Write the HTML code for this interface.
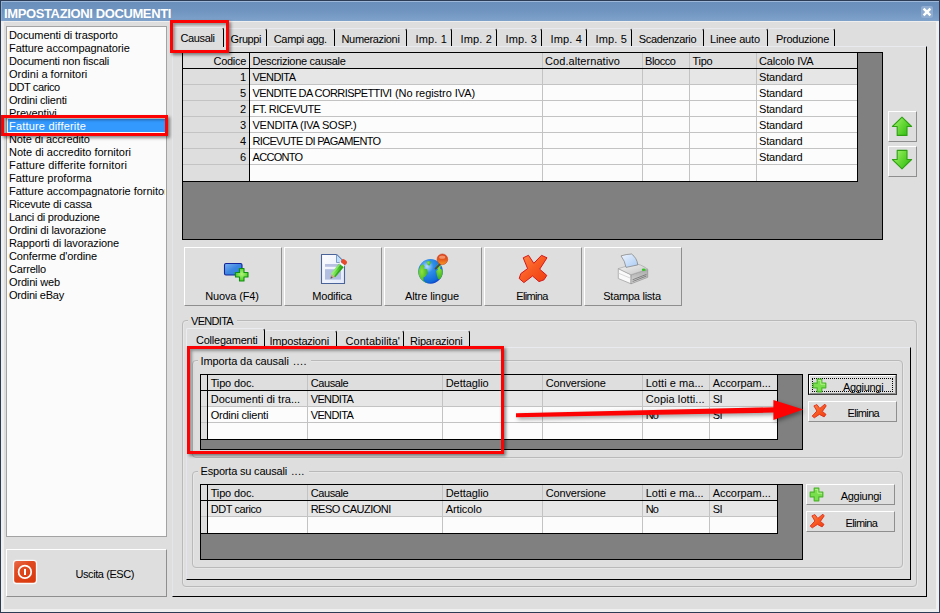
<!DOCTYPE html>
<html><head><meta charset="utf-8"><title>IMPOSTAZIONI DOCUMENTI</title><style>html,body{margin:0;padding:0}body{width:940px;height:613px;position:relative;overflow:hidden;background:#dedede;font-family:"Liberation Sans", sans-serif;font-size:11px}
body>div,body>svg,body>span{position:absolute;box-sizing:content-box}
.t{white-space:nowrap;line-height:13px;height:13px}</style></head><body>
<div style="left:0;top:0;width:938px;height:611px;border:1px solid #2b3c54;background:#dedede"></div>
<div style="left:1px;top:21px;width:932px;height:587px;border:3px solid #efefef;border-top-width:1px"></div>
<div style="left:1px;top:1px;width:938px;height:20px;background:linear-gradient(#6b8fbb,#6e93be 40%,#7ea2ca);border-top:1px solid #9db8d8;border-left:1px solid #8eaed3;box-sizing:border-box"></div>
<span class="t" id="t0" style="font-size:13px;color:#fff;font-weight:bold;letter-spacing:-0.376px;left:4px;top:7px;">IMPOSTAZIONI DOCUMENTI</span>
<div style="left:921px;top:6px;width:12px;height:12px;background:#8facd0;border-radius:2px"></div>
<svg style="left:921px;top:6px" width="12" height="12" viewBox="0 0 12 12"><path d="M2.6 2.6 L9.4 9.4 M9.4 2.6 L2.6 9.4" stroke="#fff" stroke-width="2.4" stroke-linecap="butt"/></svg>
<div style="left:6px;top:26px;width:159px;height:509px;border:1px solid #a3a3a3;background:#fbfbfb"></div>
<div style="left:8px;top:119px;width:158px;height:13px;background:#3399ff"></div>
<span class="t" id="t1" style="font-size:11px;color:#000;letter-spacing:-0.087px;left:9px;top:29px;">Documenti di trasporto</span>
<span class="t" id="t2" style="font-size:11px;color:#000;letter-spacing:-0.067px;left:9px;top:42px;">Fatture accompagnatorie</span>
<span class="t" id="t3" style="font-size:11px;color:#000;letter-spacing:-0.217px;left:9px;top:55px;">Documenti non fiscali</span>
<span class="t" id="t4" style="font-size:11px;color:#000;left:9px;top:68px;">Ordini a fornitori</span>
<span class="t" id="t5" style="font-size:11px;color:#000;letter-spacing:-0.406px;left:9px;top:81px;">DDT carico</span>
<span class="t" id="t6" style="font-size:11px;color:#000;letter-spacing:-0.199px;left:9px;top:94px;">Ordini clienti</span>
<span class="t" id="t7" style="font-size:11px;color:#000;letter-spacing:-0.055px;left:9px;top:107px;">Preventivi</span>
<span class="t" id="t8" style="font-size:11px;color:#fff;letter-spacing:0.189px;left:9px;top:120px;">Fatture differite</span>
<span class="t" id="t9" style="font-size:11px;color:#000;letter-spacing:-0.106px;left:9px;top:133px;">Note di accredito</span>
<span class="t" id="t10" style="font-size:11px;color:#000;letter-spacing:-0.010px;left:9px;top:146px;">Note di accredito fornitori</span>
<span class="t" id="t11" style="font-size:11px;color:#000;letter-spacing:0.175px;left:9px;top:159px;">Fatture differite fornitori</span>
<span class="t" id="t12" style="font-size:11px;color:#000;letter-spacing:0.052px;left:9px;top:172px;">Fatture proforma</span>
<span class="t" id="t13" style="font-size:11px;color:#000;letter-spacing:-0.025px;left:9px;top:185px;width:155.6px;overflow:hidden;">Fatture accompagnatorie fornitori</span>
<span class="t" id="t14" style="font-size:11px;color:#000;letter-spacing:-0.204px;left:9px;top:198px;">Ricevute di cassa</span>
<span class="t" id="t15" style="font-size:11px;color:#000;letter-spacing:-0.245px;left:9px;top:211px;">Lanci di produzione</span>
<span class="t" id="t16" style="font-size:11px;color:#000;letter-spacing:-0.156px;left:9px;top:224px;">Ordini di lavorazione</span>
<span class="t" id="t17" style="font-size:11px;color:#000;letter-spacing:-0.109px;left:9px;top:237px;">Rapporti di lavorazione</span>
<span class="t" id="t18" style="font-size:11px;color:#000;letter-spacing:-0.127px;left:9px;top:250px;">Conferme d'ordine</span>
<span class="t" id="t19" style="font-size:11px;color:#000;letter-spacing:-0.189px;left:9px;top:263px;">Carrello</span>
<span class="t" id="t20" style="font-size:11px;color:#000;letter-spacing:-0.158px;left:9px;top:276px;">Ordini web</span>
<span class="t" id="t21" style="font-size:11px;color:#000;letter-spacing:-0.226px;left:9px;top:289px;">Ordini eBay</span>
<div style="left:6px;top:549px;width:159px;height:46px;border:1px solid;border-color:#fff #8e8e8e #8e8e8e #fff;background:#dedede;"></div>
<svg style="left:12px;top:559px" width="26" height="26" viewBox="12 559 26 26">
<defs><linearGradient id="gq" x1="0" y1="0" x2=".6" y2="1"><stop offset="0" stop-color="#ea7150"/><stop offset=".4" stop-color="#e04a20"/><stop offset="1" stop-color="#da3a0e"/></linearGradient></defs>
<rect x="13.5" y="560.3" width="23" height="23.2" rx="3" fill="url(#gq)" stroke="#fbfbfb" stroke-width="1.3"/>
<circle cx="24.9" cy="571.9" r="6.3" fill="none" stroke="#fff" stroke-width="1.7"/>
<rect x="24" y="568.9" width="2" height="6.1" fill="#fff"/></svg>
<span class="t" id="t22" style="font-size:11px;color:#000;letter-spacing:-0.422px;left:75.5px;top:568px;">Uscita (ESC)</span>
<div style="left:172px;top:46px;width:753px;height:549px;border:1px solid;border-color:#e8eaf0 #000 #000 #e4e6ec"></div>
<div style="left:172px;top:27px;width:50px;height:19px;border-top:1px solid #eaecf0;border-left:1px solid #eaecf0;border-right:1px solid #000;border-radius:2px 3px 0 0;background:#dedede"></div>
<span class="t" id="t23" style="font-size:11px;color:#000;letter-spacing:-0.384px;left:180.5px;top:32px;">Causali</span>
<div style="left:225px;top:28px;width:41px;height:17px;border-top:1px solid #e8eaf0;border-right:1px solid #000;border-radius:2px 3px 0 0"></div>
<span class="t" id="t24" style="font-size:11px;color:#000;letter-spacing:-0.422px;left:230.5px;top:33px;">Gruppi</span>
<div style="left:267px;top:28px;width:67px;height:17px;border-top:1px solid #e8eaf0;border-right:1px solid #000;border-radius:2px 3px 0 0"></div>
<span class="t" id="t25" style="font-size:11px;color:#000;letter-spacing:-0.327px;left:273.75px;top:33px;">Campi agg.</span>
<div style="left:335px;top:28px;width:71px;height:17px;border-top:1px solid #e8eaf0;border-right:1px solid #000;border-radius:2px 3px 0 0"></div>
<span class="t" id="t26" style="font-size:11px;color:#000;letter-spacing:-0.341px;left:341.5px;top:33px;">Numerazioni</span>
<div style="left:407px;top:28px;width:44px;height:17px;border-top:1px solid #e8eaf0;border-right:1px solid #000;border-radius:2px 3px 0 0"></div>
<span class="t" id="t27" style="font-size:11px;color:#000;letter-spacing:0.154px;left:415.5px;top:33px;">Imp. 1</span>
<div style="left:452px;top:28px;width:44px;height:17px;border-top:1px solid #e8eaf0;border-right:1px solid #000;border-radius:2px 3px 0 0"></div>
<span class="t" id="t28" style="font-size:11px;color:#000;letter-spacing:0.154px;left:460.5px;top:33px;">Imp. 2</span>
<div style="left:497px;top:28px;width:44px;height:17px;border-top:1px solid #e8eaf0;border-right:1px solid #000;border-radius:2px 3px 0 0"></div>
<span class="t" id="t29" style="font-size:11px;color:#000;letter-spacing:0.154px;left:505.5px;top:33px;">Imp. 3</span>
<div style="left:542px;top:28px;width:44px;height:17px;border-top:1px solid #e8eaf0;border-right:1px solid #000;border-radius:2px 3px 0 0"></div>
<span class="t" id="t30" style="font-size:11px;color:#000;letter-spacing:0.154px;left:550.5px;top:33px;">Imp. 4</span>
<div style="left:587px;top:28px;width:44px;height:17px;border-top:1px solid #e8eaf0;border-right:1px solid #000;border-radius:2px 3px 0 0"></div>
<span class="t" id="t31" style="font-size:11px;color:#000;letter-spacing:0.154px;left:595.5px;top:33px;">Imp. 5</span>
<div style="left:632px;top:28px;width:71px;height:17px;border-top:1px solid #e8eaf0;border-right:1px solid #000;border-radius:2px 3px 0 0"></div>
<span class="t" id="t32" style="font-size:11px;color:#000;letter-spacing:-0.332px;left:638.75px;top:33px;">Scadenzario</span>
<div style="left:704px;top:28px;width:63px;height:17px;border-top:1px solid #e8eaf0;border-right:1px solid #000;border-radius:2px 3px 0 0"></div>
<span class="t" id="t33" style="font-size:11px;color:#000;letter-spacing:-0.139px;left:710px;top:33px;">Linee auto</span>
<div style="left:768px;top:28px;width:66px;height:17px;border-top:1px solid #e8eaf0;border-right:1px solid #000;border-radius:2px 3px 0 0"></div>
<span class="t" id="t34" style="font-size:11px;color:#000;letter-spacing:-0.266px;left:776px;top:33px;">Produzione</span>
<div style="left:182px;top:52px;width:699px;height:186px;border:1px solid #000;background:#808080"></div>
<div style="left:183px;top:53px;width:674px;height:128px;background:#fcfcfc;border-right:1px solid #000;border-bottom:1px solid #000"></div>
<div style="left:183px;top:53px;width:674px;height:15px;background:#dedede;border-bottom:1px solid #000"></div>
<div style="left:183px;top:69px;width:66px;height:112px;background:#dedede;border-right:1px solid #000"></div>
<div style="left:249px;top:53px;width:1px;height:15px;background:#000"></div>
<div style="left:250px;top:69px;width:607px;height:16px;background:#e6e6e6"></div>
<div style="left:183px;top:84px;width:674px;height:1px;background:#c3c3c3"></div>
<div style="left:183px;top:100px;width:674px;height:1px;background:#c3c3c3"></div>
<div style="left:183px;top:116px;width:674px;height:1px;background:#c3c3c3"></div>
<div style="left:183px;top:132px;width:674px;height:1px;background:#c3c3c3"></div>
<div style="left:183px;top:148px;width:674px;height:1px;background:#c3c3c3"></div>
<div style="left:183px;top:164px;width:674px;height:1px;background:#c3c3c3"></div>
<div style="left:542px;top:53px;width:1px;height:128px;background:#c3c3c3"></div>
<div style="left:642px;top:53px;width:1px;height:128px;background:#c3c3c3"></div>
<div style="left:689px;top:53px;width:1px;height:128px;background:#c3c3c3"></div>
<div style="left:756px;top:53px;width:1px;height:128px;background:#c3c3c3"></div>
<div style="left:249px;top:69px;width:1px;height:112px;background:#000"></div>
<div style="left:183px;top:68px;width:674px;height:1px;background:#000"></div>
<span class="t" id="t35" style="font-size:11px;color:#000;letter-spacing:-0.292px;right:694px;top:55px;">Codice</span>
<span class="t" id="t36" style="font-size:11px;color:#000;letter-spacing:-0.286px;left:252.5px;top:55px;">Descrizione causale</span>
<span class="t" id="t37" style="font-size:11px;color:#000;letter-spacing:0.067px;left:545px;top:55px;">Cod.alternativo</span>
<span class="t" id="t38" style="font-size:11px;color:#000;letter-spacing:-0.422px;left:645px;top:55px;">Blocco</span>
<span class="t" id="t39" style="font-size:11px;color:#000;letter-spacing:-0.250px;left:692.5px;top:55px;">Tipo</span>
<span class="t" id="t40" style="font-size:11px;color:#000;letter-spacing:-0.196px;left:759px;top:55px;">Calcolo IVA</span>
<span class="t" id="t41" style="font-size:11px;color:#000;right:694px;top:71px;">1</span>
<span class="t" id="t42" style="font-size:11px;color:#000;letter-spacing:-0.551px;left:252.5px;top:71px;">VENDITA</span>
<span class="t" id="t43" style="font-size:11px;color:#000;letter-spacing:-0.145px;left:759px;top:71px;">Standard</span>
<span class="t" id="t44" style="font-size:11px;color:#000;right:694px;top:87px;">5</span>
<span class="t" id="t45" style="font-size:11px;color:#000;letter-spacing:-0.576px;left:252.5px;top:87px;">VENDITE DA CORRISPETTIVI</span>
<span class="t" id="t46" style="font-size:11px;color:#000;letter-spacing:-0.064px;left:395px;top:87px;">(No registro IVA)</span>
<span class="t" id="t47" style="font-size:11px;color:#000;letter-spacing:-0.145px;left:759px;top:87px;">Standard</span>
<span class="t" id="t48" style="font-size:11px;color:#000;right:694px;top:103px;">2</span>
<span class="t" id="t49" style="font-size:11px;color:#000;letter-spacing:-0.496px;left:252.5px;top:103px;">FT. RICEVUTE</span>
<span class="t" id="t50" style="font-size:11px;color:#000;letter-spacing:-0.145px;left:759px;top:103px;">Standard</span>
<span class="t" id="t51" style="font-size:11px;color:#000;right:694px;top:119px;">3</span>
<span class="t" id="t52" style="font-size:11px;color:#000;letter-spacing:-0.221px;left:252.5px;top:119px;">VENDITA (IVA SOSP.)</span>
<span class="t" id="t53" style="font-size:11px;color:#000;letter-spacing:-0.145px;left:759px;top:119px;">Standard</span>
<span class="t" id="t54" style="font-size:11px;color:#000;right:694px;top:135px;">4</span>
<span class="t" id="t55" style="font-size:11px;color:#000;letter-spacing:-0.667px;left:252.5px;top:135px;">RICEVUTE DI PAGAMENTO</span>
<span class="t" id="t56" style="font-size:11px;color:#000;letter-spacing:-0.145px;left:759px;top:135px;">Standard</span>
<span class="t" id="t57" style="font-size:11px;color:#000;right:694px;top:151px;">6</span>
<span class="t" id="t58" style="font-size:11px;color:#000;letter-spacing:-0.688px;left:252.5px;top:151px;">ACCONTO</span>
<span class="t" id="t59" style="font-size:11px;color:#000;letter-spacing:-0.145px;left:759px;top:151px;">Standard</span>
<div style="left:888px;top:111px;width:27px;height:29px;border:1px solid;border-color:#fff #8e8e8e #8e8e8e #fff;background:#dedede;"></div>
<div style="left:888px;top:146px;width:27px;height:29px;border:1px solid;border-color:#fff #8e8e8e #8e8e8e #fff;background:#dedede;"></div>
<svg style="left:888px;top:111px" width="29" height="66" viewBox="888 111 29 66"><defs><linearGradient id="ga" x1="0" y1="0" x2="1" y2=".6"><stop offset="0" stop-color="#b4f684"/><stop offset=".5" stop-color="#6edc3c"/><stop offset="1" stop-color="#36c014"/></linearGradient></defs><path d="M902 117.2 L911.6 126.5 L907 126.5 L907 135.4 L897.2 135.4 L897.2 126.5 L892.4 126.5 Z" fill="url(#ga)" stroke="#2ea012" stroke-width="1.1" stroke-linejoin="round"/><path d="M902 168.8 L911.6 159.5 L907 159.5 L907 150.4 L897.2 150.4 L897.2 159.5 L892.4 159.5 Z" fill="url(#ga)" stroke="#2ea012" stroke-width="1.1" stroke-linejoin="round"/></svg>
<div style="left:184px;top:247px;width:96px;height:57px;border:1px solid;border-color:#fff #8e8e8e #8e8e8e #fff;background:#dedede;"></div>
<span class="t" id="t60" style="font-size:11px;color:#000;letter-spacing:-0.133px;left:205.15px;top:290px;">Nuova (F4)</span>
<div style="left:284px;top:247px;width:96px;height:57px;border:1px solid;border-color:#fff #8e8e8e #8e8e8e #fff;background:#dedede;"></div>
<span class="t" id="t61" style="font-size:11px;color:#000;letter-spacing:-0.209px;left:312.35px;top:290px;">Modifica</span>
<div style="left:384px;top:247px;width:96px;height:57px;border:1px solid;border-color:#fff #8e8e8e #8e8e8e #fff;background:#dedede;"></div>
<span class="t" id="t62" style="font-size:11px;color:#000;letter-spacing:-0.087px;left:405px;top:290px;">Altre lingue</span>
<div style="left:484px;top:247px;width:96px;height:57px;border:1px solid;border-color:#fff #8e8e8e #8e8e8e #fff;background:#dedede;"></div>
<span class="t" id="t63" style="font-size:11px;color:#000;letter-spacing:-0.654px;left:516.25px;top:290px;">Elimina</span>
<div style="left:584px;top:247px;width:96px;height:57px;border:1px solid;border-color:#fff #8e8e8e #8e8e8e #fff;background:#dedede;"></div>
<span class="t" id="t64" style="font-size:11px;color:#000;letter-spacing:-0.253px;left:603.25px;top:290px;">Stampa lista</span>
<svg style="left:215px;top:252px" width="40" height="36" viewBox="215 252 40 36">
<defs><linearGradient id="gb" x1="0" y1="0" x2="1" y2="1"><stop offset="0" stop-color="#7db4f2"/><stop offset=".5" stop-color="#3b86e0"/><stop offset="1" stop-color="#2f7ddd"/></linearGradient>
<radialGradient id="gp" cx=".5" cy=".45" r=".6"><stop offset="0" stop-color="#b4f47c"/><stop offset="1" stop-color="#3cc818"/></radialGradient></defs>
<rect x="224.5" y="263.5" width="17.5" height="11.5" rx="1.5" fill="url(#gb)" stroke="#14249a" stroke-width="1.1"/>
<path d="M239.5 268.5h4.5v4h4v4.5h-4v4h-4.5v-4h-4v-4.5h4z" fill="url(#gp)" stroke="#109010" stroke-width="1.1" stroke-linejoin="round"/>
</svg>
<svg style="left:313px;top:250px" width="40" height="38" viewBox="313 250 40 38">
<defs><linearGradient id="gpg" x1="0" y1="0" x2="1" y2="1"><stop offset="0" stop-color="#fbfcff"/><stop offset="1" stop-color="#e3e9fa"/></linearGradient>
<linearGradient id="gpc" x1="0" y1="0" x2="1" y2="0"><stop offset="0" stop-color="#8be866"/><stop offset=".45" stop-color="#5ed83a"/><stop offset="1" stop-color="#2ea418"/></linearGradient></defs>
<path d="M321.5 254.5H336.5L344.5 262.5V283.5H321.5Z" fill="url(#gpg)" stroke="#4a6398" stroke-width="1.1" stroke-linejoin="round"/>
<path d="M336.5 254.5V262.5H344.5Z" fill="#bfe0f8" stroke="#6a86b8" stroke-width=".8" stroke-linejoin="round"/>
<rect x="325" y="264" width="16" height="2.8" fill="#b9c1e2"/>
<rect x="325" y="269.2" width="16" height="10.4" fill="#b2bde2"/>
<g transform="translate(330.7 278.6) rotate(-51.5)">
<path d="M0 0 L3.9 -2.3 L3.9 2.3 Z" fill="#cfa982"/>
<path d="M-0.3 0 L1.9 -1.2 L1.9 1.2 Z" fill="#555"/>
<rect x="3.9" y="-2.8" width="13.3" height="5.6" fill="url(#gpc)"/>
<rect x="3.9" y="-2.8" width="13.3" height="1.8" fill="#a4f284" opacity=".7"/>
<rect x="3.9" y="1.2" width="13.3" height="1.6" fill="#2a9a16" opacity=".8"/>
<rect x="17.2" y="-2.9" width="2" height="5.8" fill="#f6f6f6"/>
<rect x="19.2" y="-3.1" width="4.4" height="6.2" rx="2" fill="#e64a2a"/>
</g>
</svg>
<svg style="left:412px;top:250px" width="42" height="38" viewBox="412 250 42 38">
<defs><radialGradient id="gg" cx=".36" cy=".3" r=".75"><stop offset="0" stop-color="#b6dcff"/><stop offset=".35" stop-color="#2f8ee8"/><stop offset=".85" stop-color="#116ad8"/><stop offset="1" stop-color="#1038c8"/></radialGradient>
<radialGradient id="gl" cx=".4" cy=".35" r=".8"><stop offset="0" stop-color="#8ee43c"/><stop offset="1" stop-color="#1f9e1c"/></radialGradient>
<linearGradient id="go" x1="0" y1="0" x2="0" y2="1"><stop offset="0" stop-color="#d8401c"/><stop offset=".5" stop-color="#e4561c"/><stop offset="1" stop-color="#f59a22"/></linearGradient>
<clipPath id="cg"><circle cx="430.5" cy="271.4" r="12.2"/></clipPath></defs>
<circle cx="430.5" cy="271.4" r="12.3" fill="url(#gg)"/>
<g clip-path="url(#cg)" fill="url(#gl)">
<path d="M420.6 265.5 L423.2 264.2 L424.8 267 L423.6 268.6 L427.2 269.2 L427.6 273.2 L425.6 276.2 L423.4 277.4 L423.6 281 L427 283 L425 285 L420 280 L418 272 Z"/>
<path d="M426.6 261.6 L430.4 261 L430.8 263 L429.2 265.8 L427.4 264.4 Z"/>
<path d="M436 266.5 L438.5 263.5 L441 265.5 L440 268.5 L442.5 270 L444 275 L441 279.8 L438 279 L437 275.5 L436 271 L438 269.6 Z"/>
</g>
<path d="M440.3 263.8 L435.6 268.6" stroke="#4a4a4a" stroke-width="2" stroke-linecap="round"/>
<circle cx="442.4" cy="259.3" r="5.3" fill="url(#go)" stroke="#cf3a18" stroke-width=".6"/>
<ellipse cx="442.2" cy="257.2" rx="3.1" ry="1.6" fill="#f6a27a" opacity=".8"/>
</svg>
<svg style="left:513px;top:250px" width="40" height="38" viewBox="513 250 40 38">
<defs><linearGradient id="gx" x1="0" y1="0" x2="1" y2="1"><stop offset="0" stop-color="#ff8848"/><stop offset=".5" stop-color="#f85a22"/><stop offset="1" stop-color="#ee3c10"/></linearGradient></defs>
<path d="M523.2 257.8 L528.5 255.3 L533.8 263.3 L541.5 255.3 L547 257.8 L539.7 269.2 L546.8 275.4 L544 279.8 L539 281.6 L532.5 276 L523.9 282.6 L519.2 278.5 L520.8 273.6 L527.6 268.6 Z" fill="url(#gx)" stroke="#d4181a" stroke-width="1" stroke-linejoin="round"/>
</svg>
<svg style="left:613px;top:250px" width="40" height="38" viewBox="613 250 40 38">
<defs><linearGradient id="gt" x1="0" y1="0" x2="1" y2="1"><stop offset="0" stop-color="#f6f6f6"/><stop offset="1" stop-color="#c2c2c2"/></linearGradient>
<linearGradient id="gr" x1="0" y1="0" x2="0" y2="1"><stop offset="0" stop-color="#a8a8a8"/><stop offset="1" stop-color="#dcdcdc"/></linearGradient>
<linearGradient id="gpa" x1="0" y1="0" x2="1" y2="1"><stop offset="0" stop-color="#eef4ff"/><stop offset="1" stop-color="#a9cbf3"/></linearGradient></defs>
<path d="M618.3 268.6 L631 274.8 L631 283.8 L618.3 278.5 Z" fill="#fafafa" stroke="#9a9a9a" stroke-width=".7" stroke-linejoin="round"/>
<path d="M631 274.8 L647.7 269.2 L647.7 277.3 L631 283.8 Z" fill="url(#gr)" stroke="#8e8e8e" stroke-width=".7" stroke-linejoin="round"/>
<path d="M618.3 268.6 L634 264 Q640 263.4 647.7 269.2 L631 274.8 Z" fill="url(#gt)" stroke="#a6a6a6" stroke-width=".7" stroke-linejoin="round"/>
<path d="M618.5 273.2 L631 278.4" stroke="#cfcfcf" stroke-width=".8"/>
<path d="M632.5 279.8 L646.5 274.4 M632.5 281.6 L646.5 276" stroke="#777" stroke-width=".9"/>
<path d="M621 255.9 Q626 254.2 631.6 254 Q637 258 637.8 264.9 L626 267.4 Q625 261 621 255.9 Z" fill="url(#gpa)" stroke="#7c7c7c" stroke-width=".7" stroke-linejoin="round"/>
<ellipse cx="643.7" cy="269.7" rx="1.9" ry="1.2" fill="#34c422"/>
</svg>

<div style="left:182px;top:320px;width:733px;height:265px;border:1px solid #b9b9b9;border-radius:4px;box-shadow:inset 1px 1px 0 #e6e6e6, 1px 1px 0 #e6e6e6"></div>
<div style="left:188px;top:314px;width:49px;height:13px;background:#dedede"></div>
<span class="t" id="t65" style="font-size:11px;color:#000;letter-spacing:-0.694px;left:191px;top:315px;">VENDITA</span>
<div style="left:186px;top:347px;width:723px;height:231px;border:1px solid;border-color:#e8eaf0 #000 #000 #e4e6ec"></div>
<div style="left:186px;top:328px;width:77px;height:19px;border-top:1px solid #eaecf0;border-left:1px solid #eaecf0;border-right:1px solid #000;border-radius:2px 3px 0 0;background:#dedede"></div>
<span class="t" id="t66" style="font-size:11px;color:#000;letter-spacing:-0.225px;left:196px;top:334px;">Collegamenti</span>
<div style="left:265px;top:330px;width:71px;height:16px;border-top:1px solid #eaecf0;border-right:1px solid #000;border-radius:2px 3px 0 0"></div>
<span class="t" id="t67" style="font-size:11px;color:#000;letter-spacing:-0.189px;left:269.5px;top:335px;">Impostazioni</span>
<div style="left:337px;top:330px;width:66px;height:16px;border-top:1px solid #eaecf0;border-right:1px solid #000;border-radius:2px 3px 0 0"></div>
<span class="t" id="t68" style="font-size:11px;color:#000;letter-spacing:0.035px;left:345.5px;top:335px;">Contabilita'</span>
<div style="left:404px;top:330px;width:65px;height:16px;border-top:1px solid #eaecf0;border-right:1px solid #000;border-radius:2px 3px 0 0"></div>
<span class="t" id="t69" style="font-size:11px;color:#000;letter-spacing:-0.230px;left:410px;top:335px;">Riparazioni</span>
<div style="left:192px;top:360px;width:709px;height:96px;border:1px solid #b9b9b9;border-radius:4px;box-shadow:inset 1px 1px 0 #e6e6e6, 1px 1px 0 #e6e6e6"></div>
<div style="left:197.5px;top:354px;width:113.5px;height:13px;background:#dedede"></div>
<span class="t" id="t70" style="font-size:11px;color:#000;letter-spacing:-0.091px;left:200.5px;top:355px;">Importa da causali</span>
<span class="t" id="t71" style="font-size:11px;color:#000;letter-spacing:0.441px;left:293px;top:355px;">....</span>
<div style="left:200px;top:374px;width:601px;height:74px;border:1px solid #000;background:#808080"></div>
<div style="left:201px;top:375px;width:576px;height:64px;background:#fcfcfc;border-right:1px solid #000;border-bottom:1px solid #000"></div>
<div style="left:201px;top:375px;width:576px;height:15px;background:#dedede;border-bottom:1px solid #000"></div>
<div style="left:201px;top:391px;width:6px;height:48px;background:#dedede"></div>
<div style="left:208px;top:391px;width:569px;height:16px;background:#e6e6e6"></div>
<div style="left:201px;top:406px;width:576px;height:1px;background:#c3c3c3"></div>
<div style="left:201px;top:422px;width:576px;height:1px;background:#c3c3c3"></div>
<div style="left:307px;top:375px;width:1px;height:64px;background:#c3c3c3"></div>
<div style="left:442px;top:375px;width:1px;height:64px;background:#c3c3c3"></div>
<div style="left:542px;top:375px;width:1px;height:64px;background:#c3c3c3"></div>
<div style="left:642px;top:375px;width:1px;height:64px;background:#c3c3c3"></div>
<div style="left:709px;top:375px;width:1px;height:64px;background:#c3c3c3"></div>
<div style="left:207px;top:375px;width:1px;height:64px;background:#000"></div>
<div style="left:201px;top:390px;width:576px;height:1px;background:#000"></div>
<span class="t" id="t72" style="font-size:11px;color:#000;letter-spacing:-0.149px;left:210.7px;top:377px;">Tipo doc.</span>
<span class="t" id="t73" style="font-size:11px;color:#000;letter-spacing:-0.408px;left:310.7px;top:377px;">Causale</span>
<span class="t" id="t74" style="font-size:11px;color:#000;letter-spacing:-0.047px;left:445.7px;top:377px;">Dettaglio</span>
<span class="t" id="t75" style="font-size:11px;color:#000;letter-spacing:-0.161px;left:545.7px;top:377px;">Conversione</span>
<span class="t" id="t76" style="font-size:11px;color:#000;letter-spacing:0.040px;left:645.7px;top:377px;">Lotti e ma...</span>
<span class="t" id="t77" style="font-size:11px;color:#000;letter-spacing:-0.062px;left:712.7px;top:377px;">Accorpam...</span>
<span class="t" id="t78" style="font-size:11px;color:#000;letter-spacing:0.012px;left:210.7px;top:393px;">Documenti di tra...</span>
<span class="t" id="t79" style="font-size:11px;color:#000;letter-spacing:-0.623px;left:310.7px;top:393px;">VENDITA</span>
<span class="t" id="t80" style="font-size:11px;color:#000;letter-spacing:0.065px;left:645.7px;top:393px;">Copia lotti...</span>
<span class="t" id="t81" style="font-size:11px;color:#000;letter-spacing:-0.453px;left:712.7px;top:393px;">SI</span>
<span class="t" id="t82" style="font-size:11px;color:#000;letter-spacing:-0.217px;left:210.7px;top:409px;">Ordini clienti</span>
<span class="t" id="t83" style="font-size:11px;color:#000;letter-spacing:-0.623px;left:310.7px;top:409px;">VENDITA</span>
<span class="t" id="t84" style="font-size:11px;color:#000;letter-spacing:-0.781px;left:645.7px;top:409px;">No</span>
<span class="t" id="t85" style="font-size:11px;color:#000;letter-spacing:-0.453px;left:712.7px;top:409px;">SI</span>
<div style="left:192px;top:471px;width:709px;height:95px;border:1px solid #b9b9b9;border-radius:4px;box-shadow:inset 1px 1px 0 #e6e6e6, 1px 1px 0 #e6e6e6"></div>
<div style="left:197.5px;top:465px;width:111px;height:13px;background:#dedede"></div>
<span class="t" id="t86" style="font-size:11px;color:#000;letter-spacing:-0.188px;left:200.5px;top:465px;">Esporta su causali</span>
<span class="t" id="t87" style="font-size:11px;color:#000;letter-spacing:0.316px;left:291.25px;top:465px;">....</span>
<div style="left:200px;top:484px;width:601px;height:74px;border:1px solid #000;background:#808080"></div>
<div style="left:201px;top:485px;width:576px;height:48px;background:#fcfcfc;border-right:1px solid #000;border-bottom:1px solid #000"></div>
<div style="left:201px;top:485px;width:576px;height:15px;background:#dedede;border-bottom:1px solid #000"></div>
<div style="left:201px;top:501px;width:6px;height:32px;background:#dedede"></div>
<div style="left:208px;top:501px;width:569px;height:16px;background:#e6e6e6"></div>
<div style="left:201px;top:516px;width:576px;height:1px;background:#c3c3c3"></div>
<div style="left:307px;top:485px;width:1px;height:48px;background:#c3c3c3"></div>
<div style="left:442px;top:485px;width:1px;height:48px;background:#c3c3c3"></div>
<div style="left:542px;top:485px;width:1px;height:48px;background:#c3c3c3"></div>
<div style="left:642px;top:485px;width:1px;height:48px;background:#c3c3c3"></div>
<div style="left:709px;top:485px;width:1px;height:48px;background:#c3c3c3"></div>
<div style="left:207px;top:485px;width:1px;height:48px;background:#000"></div>
<div style="left:201px;top:500px;width:576px;height:1px;background:#000"></div>
<span class="t" id="t88" style="font-size:11px;color:#000;letter-spacing:-0.149px;left:210.7px;top:487px;">Tipo doc.</span>
<span class="t" id="t89" style="font-size:11px;color:#000;letter-spacing:-0.408px;left:310.7px;top:487px;">Causale</span>
<span class="t" id="t90" style="font-size:11px;color:#000;letter-spacing:-0.047px;left:445.7px;top:487px;">Dettaglio</span>
<span class="t" id="t91" style="font-size:11px;color:#000;letter-spacing:-0.161px;left:545.7px;top:487px;">Conversione</span>
<span class="t" id="t92" style="font-size:11px;color:#000;letter-spacing:0.040px;left:645.7px;top:487px;">Lotti e ma...</span>
<span class="t" id="t93" style="font-size:11px;color:#000;letter-spacing:-0.062px;left:712.7px;top:487px;">Accorpam...</span>
<span class="t" id="t94" style="font-size:11px;color:#000;letter-spacing:-0.431px;left:210.7px;top:503px;">DDT carico</span>
<span class="t" id="t95" style="font-size:11px;color:#000;letter-spacing:-0.523px;left:310.7px;top:503px;">RESO CAUZIONI</span>
<span class="t" id="t96" style="font-size:11px;color:#000;letter-spacing:-0.086px;left:445.7px;top:503px;">Articolo</span>
<span class="t" id="t97" style="font-size:11px;color:#000;letter-spacing:-0.781px;left:645.7px;top:503px;">No</span>
<span class="t" id="t98" style="font-size:11px;color:#000;letter-spacing:-0.453px;left:712.7px;top:503px;">SI</span>
<div style="left:808px;top:374px;width:87px;height:19px;border:1px solid;border-color:#000 #444 #444 #000;background:#dedede"></div>
<div style="left:809px;top:375px;width:85px;height:17px;border:1px solid;border-color:#fff #8e8e8e #8e8e8e #fff"></div>
<div style="left:812px;top:378px;width:79px;height:12px;border:1px dotted #000"></div>
<svg style="left:812px;top:377.8px" width="15" height="15" viewBox="0 0 15 15"><path d="M5.2 1.2h4.6v4h4v4.6h-4v4h-4.6v-4h-4v-4.6h4z" fill="#7adf4c" stroke="#48b626" stroke-width="1.2" stroke-linejoin="round"/><path d="M6.2 2.4h2.6v3.8h3.8v1" fill="none" stroke="#b9f190" stroke-width="1"/></svg>
<span class="t" id="t99" style="font-size:11px;color:#000;letter-spacing:-0.316px;left:843px;top:381px;">Aggiungi</span>
<div style="left:808px;top:401px;width:87px;height:19px;border:1px solid;border-color:#fff #8e8e8e #8e8e8e #fff;background:#dedede;"></div>
<svg style="left:811px;top:403px" width="17" height="17" viewBox="0 0 17 17"><path d="M2.9 2.9 L5.9 1.6 L8.8 5.4 L13.9 1.2 L15.2 2.9 L11.4 8.4 L15 11.4 L13.1 13.9 L8.4 11.4 L3.3 14.8 L1.2 13.1 L5.9 8 Z" fill="url(#gx)" stroke="#dc2c1a" stroke-width="0.9" stroke-linejoin="round"/></svg>
<span class="t" id="t100" style="font-size:11px;color:#000;letter-spacing:-0.640px;left:847.5px;top:407px;">Elimina</span>
<div style="left:806px;top:484px;width:87px;height:19px;border:1px solid;border-color:#fff #8e8e8e #8e8e8e #fff;background:#dedede;"></div>
<svg style="left:809.4px;top:486.6px" width="15" height="15" viewBox="0 0 15 15"><path d="M5.2 1.2h4.6v4h4v4.6h-4v4h-4.6v-4h-4v-4.6h4z" fill="#7adf4c" stroke="#48b626" stroke-width="1.2" stroke-linejoin="round"/><path d="M6.2 2.4h2.6v3.8h3.8v1" fill="none" stroke="#b9f190" stroke-width="1"/></svg>
<span class="t" id="t101" style="font-size:11px;color:#000;letter-spacing:-0.279px;left:840.7px;top:490px;">Aggiungi</span>
<div style="left:806px;top:511px;width:87px;height:19px;border:1px solid;border-color:#fff #8e8e8e #8e8e8e #fff;background:#dedede;"></div>
<svg style="left:808.8px;top:513.1px" width="17" height="17" viewBox="0 0 17 17"><path d="M2.9 2.9 L5.9 1.6 L8.8 5.4 L13.9 1.2 L15.2 2.9 L11.4 8.4 L15 11.4 L13.1 13.9 L8.4 11.4 L3.3 14.8 L1.2 13.1 L5.9 8 Z" fill="url(#gx)" stroke="#dc2c1a" stroke-width="0.9" stroke-linejoin="round"/></svg>
<span class="t" id="t102" style="font-size:11px;color:#000;letter-spacing:-0.640px;left:845.6px;top:517px;">Elimina</span>
<div style="left:170px;top:20px;width:53px;height:27px;border:3px solid #fd0202;box-shadow:2px 2px 3px rgba(0,0,0,.45), inset 2px 2px 3px rgba(0,0,0,.35)"></div>
<div style="left:1px;top:115px;width:161px;height:15px;border:3px solid #fd0202;box-shadow:2px 2px 3px rgba(0,0,0,.45), inset 2px 2px 3px rgba(0,0,0,.35)"></div>
<div style="left:187px;top:346px;width:311px;height:102px;border:3px solid #fd0202;box-shadow:2px 2px 3px rgba(0,0,0,.45), inset 2px 2px 3px rgba(0,0,0,.35)"></div>
<svg style="left:505px;top:392px;filter:drop-shadow(2px 2px 2px rgba(0,0,0,.4))" width="305" height="36" viewBox="505 392 305 36"><path d="M516 413.2 L773.4 407.2 L773.4 400.1 L803.3 409.6 L773.4 420 L773.4 412.6 L516 417.3 Z" fill="#fd0202"/></svg>
</body></html>
